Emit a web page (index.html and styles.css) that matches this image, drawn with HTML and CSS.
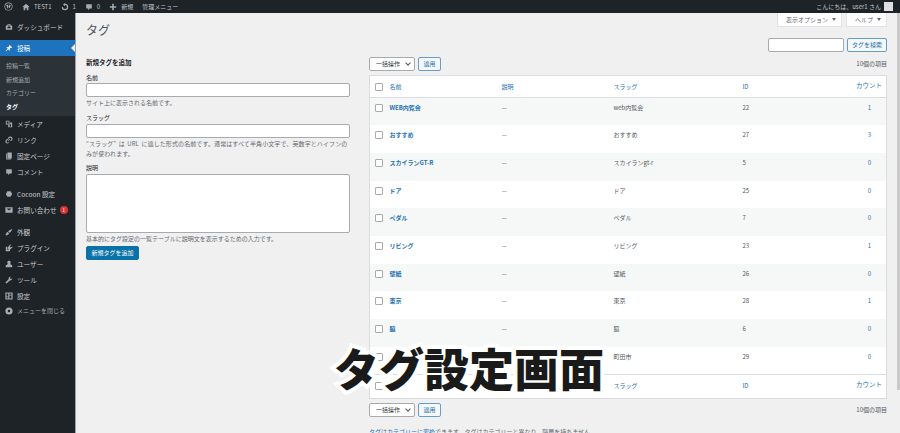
FILE: index.html
```html
<!DOCTYPE html>
<html lang="ja">
<head>
    <meta charset="UTF-8">
    <title>タグ設定画面</title>
    <link rel="stylesheet" href="styles.css">
</head>
<body>
    <svg class="defs" width="0" height="0">
        <symbol id="i-dash" viewBox="0 0 20 20"><path d="M2 6h16v11H2zM6 6V3h8v3h-2V5H8v1zM10 8a4 4 0 0 0-4 4v1h8v-1a4 4 0 0 0-4-4z" fill-rule="evenodd"/></symbol>
        <symbol id="i-pin" viewBox="0 0 20 20"><path d="M11 2l7 7-2 1-1-1-3 3 0 4-1 1-3-4-5 5-1 0 0-1 5-5-4-3 1-1 4 0 3-3-1-1z"/></symbol>
        <symbol id="i-media" viewBox="0 0 20 20"><path d="M2 2h9v9H2zM4 4v5h5V4zM12 6h6v12H8v-6h4zM13 10v3a2 2 0 1 0 2 2v-5z" fill-rule="evenodd"/></symbol>
        <symbol id="i-link" viewBox="0 0 20 20"><path d="M13 1a6 6 0 0 1 6 6c0 3-2 5-5 6l-1-2c2-1 3-2 3-4a3 3 0 0 0-5-2L9 7 7 6c1-3 3-5 6-5zM7 7l2 2c-3 1-5 3-5 5a2 2 0 0 0 4 1l2 2c-1 1-2 2-4 2-3 0-5-2-5-5 0-3 3-6 6-7zM12 7l1 1-5 5-1-1z"/></symbol>
        <symbol id="i-page" viewBox="0 0 20 20"><path d="M6 1h11v15H6zM3 4h2v13h10v2H3z"/></symbol>
        <symbol id="i-comment" viewBox="0 0 20 20"><path d="M3 3h14v11h-5l-4 4v-4H3z"/></symbol>
        <symbol id="i-cocoon" viewBox="0 0 20 20"><path d="M6 3h8l4 7-4 7H6l-4-7z"/></symbol>
        <symbol id="i-mail" viewBox="0 0 20 20"><path d="M1 3h18v14H1zM4 6l6 5 6-5z" fill-rule="evenodd"/></symbol>
        <symbol id="i-brush" viewBox="0 0 20 20"><path d="M19 2l-9 4-2 3 3 3 3-2zM7 10l-3 1-3 7c4 1 8-1 9-5z"/></symbol>
        <symbol id="i-plug" viewBox="0 0 20 20"><path d="M13 1l2 1-3 5 2 2 4-3 1 2-4 4-2 2-1 4H2v-3h6l1-2-2-2 1-4zM2 7h4v8H2z"/></symbol>
        <symbol id="i-user" viewBox="0 0 20 20"><path d="M10 2a4 4 0 0 1 3 7l1 2 4 2v5H2v-5l4-2 1-2a4 4 0 0 1 3-7z"/></symbol>
        <symbol id="i-tool" viewBox="0 0 20 20"><path d="M18 5l-3 3-3-3 3-3a5 5 0 0 0-6 6l-8 8 3 3 8-8a5 5 0 0 0 6-6z"/></symbol>
        <symbol id="i-set" viewBox="0 0 20 20"><path d="M1 1h18v18H1zM4 4v7h4V4zM4 13v3h4v-3zM11 4v3h5V4zM11 9v7h5V9z" fill-rule="evenodd"/></symbol>
        <symbol id="i-close" viewBox="0 0 20 20"><path d="M10 1a9 9 0 1 1 0 18 9 9 0 0 1 0-18zM10 7a3 3 0 1 0 0 6 3 3 0 0 0 0-6z" fill-rule="evenodd"/></symbol>
        <symbol id="i-wp" viewBox="0 0 20 20"><path d="M10 1a9 9 0 1 1 0 18 9 9 0 0 1 0-18zM10 2.500a7.500 7.500 0 1 0 0 15 7.500 7.500 0 0 0 0-15zM5 7l3 8 2-5 2 5 3-8-1-1h-3l1 1-2 4-1-4 1-1H5z" fill-rule="evenodd"/></symbol>
        <symbol id="i-home" viewBox="0 0 20 20"><path d="M10 2l9 8h-3v8h-4v-5H8v5H4v-8H1z"/></symbol>
        <symbol id="i-update" viewBox="0 0 20 20"><path d="M10 2a8 8 0 1 1-8 8h3a5 5 0 1 0 5-5v3L5 4l5-4z"/></symbol>
        <symbol id="i-plus" viewBox="0 0 20 20"><path d="M8 2h4v6h6v4h-6v6H8v-6H2V8h6z"/></symbol>
    </svg>

    <div class="adminbar">
        <div class="bar-left">
            <svg class="bar-icon wp"><use href="#i-wp"/></svg>
            <span class="bar-item"><svg class="bar-icon"><use href="#i-home"/></svg>TEST1</span>
            <span class="bar-item"><svg class="bar-icon"><use href="#i-update"/></svg>1</span>
            <span class="bar-item"><svg class="bar-icon"><use href="#i-comment"/></svg>0</span>
            <span class="bar-item"><svg class="bar-icon"><use href="#i-plus"/></svg>新規</span>
            <span class="bar-item">管理メニュー</span>
        </div>
        <div class="bar-right">こんにちは、user1 さん<span class="avatar"></span></div>
    </div>

    <div class="wrap">
        <div class="sidebar">
            <div class="menu-item"><svg><use href="#i-dash"/></svg>ダッシュボード</div>
            <div class="menu-item active"><svg><use href="#i-pin"/></svg>投稿</div>
            <div class="submenu">
                <div>投稿一覧</div>
                <div>新規追加</div>
                <div>カテゴリー</div>
                <div class="current">タグ</div>
            </div>
            <div class="menu-item"><svg><use href="#i-media"/></svg>メディア</div>
            <div class="menu-item"><svg><use href="#i-link"/></svg>リンク</div>
            <div class="menu-item"><svg><use href="#i-page"/></svg>固定ページ</div>
            <div class="menu-item"><svg><use href="#i-comment"/></svg>コメント</div>
            <div class="menu-item sep"><svg><use href="#i-cocoon"/></svg>Cocoon 設定</div>
            <div class="menu-item"><svg><use href="#i-mail"/></svg>お問い合わせ<span class="badge">1</span></div>
            <div class="menu-item sep"><svg><use href="#i-brush"/></svg>外観</div>
            <div class="menu-item"><svg><use href="#i-plug"/></svg>プラグイン</div>
            <div class="menu-item"><svg><use href="#i-user"/></svg>ユーザー</div>
            <div class="menu-item"><svg><use href="#i-tool"/></svg>ツール</div>
            <div class="menu-item"><svg><use href="#i-set"/></svg>設定</div>
            <div class="menu-item dim"><svg><use href="#i-close"/></svg>メニューを閉じる</div>
        </div>

        <div class="main">
            <div class="screen-meta">
                <span class="meta-tab">表示オプション<i class="arrow"></i></span>
                <span class="meta-tab">ヘルプ<i class="arrow"></i></span>
            </div>
            <h1 class="page-title">タグ</h1>
            <div class="search-row">
                <input class="text-input search" type="text">
                <button class="btn search-btn">タグを検索</button>
            </div>
            <div class="columns">
                <div class="col-form">
                    <h2>新規タグを追加</h2>
                    <label>名前</label>
                    <input class="text-input" type="text">
                    <p class="hint">サイト上に表示される名前です。</p>
                    <label class="slug-label">スラッグ</label>
                    <input class="text-input" type="text">
                    <p class="hint wide">“スラッグ” は URL に適した形式の名前です。通常はすべて半角小文字で、英数字とハイフンの<br>みが使われます。</p>
                    <label class="desc-label">説明</label>
                    <textarea class="text-area"></textarea>
                    <p class="hint">基本的にタグ設定の一覧テーブルに説明文を表示するための入力です。</p>
                    <button class="btn primary">新規タグを追加</button>
                </div>
                <div class="col-table">
                    <div class="tablenav top">
                        <span class="select">一括操作<i class="chev"></i></span>
                        <button class="btn apply">適用</button>
                        <span class="count-text">10個の項目</span>
                    </div>
                    <table class="tags">
                        <thead>
                            <tr><th class="c-check"><span class="check"></span></th><th class="c-name">名前</th><th class="c-desc">説明</th><th class="c-slug">スラッグ</th><th class="c-id">ID</th><th class="c-count">カウント</th></tr>
                        </thead>
                        <tbody>
                            <tr><td class="c-check"><span class="check"></span></td><td class="c-name">WEB内覧会</td><td class="c-desc">—</td><td class="c-slug">web内覧会</td><td class="c-id">22</td><td class="c-count">1</td></tr>
                            <tr><td class="c-check"><span class="check"></span></td><td class="c-name">おすすめ</td><td class="c-desc">—</td><td class="c-slug">おすすめ</td><td class="c-id">27</td><td class="c-count">3</td></tr>
                            <tr><td class="c-check"><span class="check"></span></td><td class="c-name">スカイランGT-R</td><td class="c-desc">—</td><td class="c-slug">スカイランgt-r</td><td class="c-id">5</td><td class="c-count">0</td></tr>
                            <tr><td class="c-check"><span class="check"></span></td><td class="c-name">ドア</td><td class="c-desc">—</td><td class="c-slug">ドア</td><td class="c-id">25</td><td class="c-count">0</td></tr>
                            <tr><td class="c-check"><span class="check"></span></td><td class="c-name">ペダル</td><td class="c-desc">—</td><td class="c-slug">ペダル</td><td class="c-id">7</td><td class="c-count">0</td></tr>
                            <tr><td class="c-check"><span class="check"></span></td><td class="c-name">リビング</td><td class="c-desc">—</td><td class="c-slug">リビング</td><td class="c-id">23</td><td class="c-count">1</td></tr>
                            <tr><td class="c-check"><span class="check"></span></td><td class="c-name">壁紙</td><td class="c-desc">—</td><td class="c-slug">壁紙</td><td class="c-id">26</td><td class="c-count">0</td></tr>
                            <tr><td class="c-check"><span class="check"></span></td><td class="c-name">東京</td><td class="c-desc">—</td><td class="c-slug">東京</td><td class="c-id">28</td><td class="c-count">1</td></tr>
                            <tr><td class="c-check"><span class="check"></span></td><td class="c-name">脇</td><td class="c-desc">—</td><td class="c-slug">脇</td><td class="c-id">6</td><td class="c-count">0</td></tr>
                            <tr><td class="c-check"><span class="check"></span></td><td class="c-name">町田市</td><td class="c-desc">—</td><td class="c-slug">町田市</td><td class="c-id">29</td><td class="c-count">0</td></tr>
                        </tbody>
                        <tfoot>
                            <tr><th class="c-check"><span class="check"></span></th><th class="c-name">名前</th><th class="c-desc">説明</th><th class="c-slug">スラッグ</th><th class="c-id">ID</th><th class="c-count">カウント</th></tr>
                        </tfoot>
                    </table>
                    <div class="tablenav bottom">
                        <span class="select">一括操作<i class="chev"></i></span>
                        <button class="btn apply">適用</button>
                        <span class="count-text">10個の項目</span>
                    </div>
                    <p class="foot-note"><a>タグ</a>は<a>カテゴリーに変換</a>できます。タグはカテゴリーと異なり、階層を持ちません。</p>
                </div>
            </div>
        </div>
    </div>

    <div class="caption">タグ設定画面</div>
    <div class="scrollbar"></div>
</body>
</html>
```

FILE: styles.css
```css
html, body {
    height: 100%;
}
body {
    margin: 0;
    height: 433px;
    overflow: hidden;
    position: relative;
    background: #f0f0f1;
    color: #3c434a;
    font-family: "Noto Sans CJK JP", "Noto Sans", sans-serif;
    font-size: 6px;
    line-height: 10px;
}
.defs {
    position: absolute;
}

/* admin bar */
.adminbar {
    height: 13px;
    background: #1d2327;
    color: #c3c4c7;
    display: flex;
    justify-content: space-between;
    align-items: center;
    font-size: 6px;
}
.bar-left {
    display: flex;
    align-items: center;
    padding-left: 4px;
}
.bar-item {
    display: flex;
    align-items: center;
    gap: 4px;
    margin-left: 9px;
}
.bar-icon {
    width: 8px;
    height: 8px;
    fill: #a7aaad;
}
.bar-icon.wp {
    width: 9px;
    height: 9px;
}
.bar-right {
    display: flex;
    align-items: center;
    gap: 3px;
    padding-right: 7px;
}
.avatar {
    width: 9px;
    height: 9px;
    background: #e0e0e0;
}

.wrap {
    display: flex;
    height: 420px;
}

/* side menu */
.sidebar {
    width: 76px;
    flex: none;
    background: #1d2327;
    color: #c9cbce;
    padding-top: 6px;
    border-right: 1px solid #9aa0a5;
    box-sizing: border-box;
    font-size: 6.600px;
}
.menu-item {
    height: 16px;
    display: flex;
    align-items: center;
    padding-left: 5px;
    gap: 4px;
}
.menu-item svg {
    width: 8px;
    height: 8px;
    fill: #a7aaad;
    flex: none;
}
.menu-item.active {
    background: #1e73be;
    color: #fff;
    position: relative;
    margin-top: 5px;
}
.menu-item.active svg {
    fill: #fff;
}
.menu-item.active::after {
    content: "";
    position: absolute;
    right: 0;
    top: 4px;
    border: 4px solid transparent;
    border-right-color: #f0f0f1;
    border-left: 0;
}
.menu-item.sep {
    margin-top: 6px;
}
.menu-item.dim {
    color: #a7aaad;
    font-size: 6px;
    margin-top: -1px;
}
.submenu {
    background: #2c3338;
    color: #a7aaad;
    padding: 3px 0 3px 6px;
    font-size: 6px;
    line-height: 13.500px;
}
.submenu .current {
    color: #fff;
    font-weight: 700;
}
.badge {
    width: 8px;
    height: 8px;
    border-radius: 50%;
    background: #d63638;
    color: #fff;
    font-size: 5px;
    line-height: 8px;
    text-align: center;
    margin-left: -1px;
}

/* main area */
.main {
    flex: 1;
    min-width: 0;
    padding: 0 13px 0 10px;
}
.screen-meta {
    display: flex;
    justify-content: flex-end;
    gap: 4px;
}
.meta-tab {
    height: 14px;
    line-height: 13px;
    padding: 0 5px 0 8px;
    background: #fff;
    border: 1px solid #e2e2e4;
    border-top: 0;
    box-sizing: border-box;
    color: #646970;
    font-size: 6px;
}
.arrow {
    display: inline-block;
    margin: 0 0 1px 4px;
    border: 2px solid transparent;
    border-top: 3px solid #646970;
    border-bottom: 0;
    vertical-align: middle;
}
.page-title {
    margin: -6px 0 0;
    font-size: 12px;
    line-height: 17px;
    font-weight: 400;
    color: #50575e;
}
.search-row {
    display: flex;
    justify-content: flex-end;
    gap: 3px;
}
.text-input {
    display: block;
    width: 100%;
    height: 14px;
    margin: 0;
    padding: 0;
    box-sizing: border-box;
    background: #fff;
    border: 1px solid #a8aaae;
    border-radius: 2px;
}
.text-input.search {
    width: 76px;
}
.btn {
    height: 14px;
    padding: 0;
    margin: 0;
    background: #f6f7f7;
    border: 1px solid #5f9fd0;
    border-radius: 2px;
    color: #2271b1;
    font-family: inherit;
    font-size: 6px;
    line-height: 12px;
}
.search-btn {
    width: 40px;
}
.apply {
    width: 23px;
}
.btn.primary {
    display: block;
    margin-top: 2px;
    width: 53px;
    background: #0a72a6;
    border-color: #0a72a6;
    color: #fff;
}

.columns {
    display: flex;
    gap: 19px;
}

/* add tag form */
.col-form {
    width: 264px;
    flex: none;
    padding-top: 5px;
}
.col-form h2 {
    margin: 0 0 7px;
    font-size: 6.500px;
    line-height: 10px;
    font-weight: 700;
    color: #1d2327;
}
.col-form label {
    display: block;
    color: #1d2327;
    font-size: 6px;
    line-height: 8px;
    margin-bottom: 1px;
}
.col-form .slug-label {
    margin-top: 6px;
    margin-bottom: 2px;
}
.col-form .desc-label {
    margin-top: 5px;
    margin-bottom: 2px;
}
.hint {
    margin: 1px 0 0;
    color: #646970;
    font-size: 6px;
    line-height: 10px;
}
.hint.wide {
    white-space: nowrap;
    letter-spacing: 0.1px;
    word-spacing: 1px;
}
.text-area {
    display: block;
    width: 100%;
    height: 59px;
    margin: 0;
    padding: 0;
    box-sizing: border-box;
    background: #fff;
    border: 1px solid #a8aaae;
    border-radius: 2px;
    resize: none;
}

/* tag list */
.col-table {
    width: 518px;
    flex: none;
}
.tablenav {
    display: flex;
    align-items: center;
    gap: 3px;
    height: 14px;
}
.tablenav.top {
    margin: 5px 0 4px;
}
.tablenav.bottom {
    margin-top: 4px;
}
.select {
    width: 46px;
    height: 14px;
    box-sizing: border-box;
    background: #fff;
    border: 1px solid #a8aaae;
    border-radius: 2px;
    padding-left: 6px;
    display: flex;
    align-items: center;
    font-size: 6px;
    color: #2c3338;
    position: relative;
}
.chev {
    position: absolute;
    right: 4px;
    top: 3px;
    width: 3px;
    height: 3px;
    border-right: 1px solid #50575e;
    border-bottom: 1px solid #50575e;
    transform: rotate(45deg);
}
.count-text {
    margin-left: auto;
    font-size: 6px;
    color: #50575e;
}
.tags {
    width: 100%;
    table-layout: fixed;
    border-collapse: collapse;
    background: #fff;
    border: 1px solid #dcdcde;
    font-size: 6px;
}
.tags th {
    height: 22px;
    padding: 0;
    box-sizing: border-box;
    font-weight: 400;
    text-align: left;
    color: #2271b1;
}
.tags thead th {
    border-bottom: 1px solid #dcdcde;
}
.tags tfoot th {
    border-top: 1px solid #dcdcde;
    height: 24px;
}
.tags td {
    height: 27.700px;
    padding: 5px 0 0;
    box-sizing: border-box;
    vertical-align: top;
    color: #50575e;
}
.tags tbody tr:nth-child(odd) {
    background: #f6f7f7;
}
.tags td.c-name {
    color: #2271b1;
    font-weight: 700;
}
.tags th.c-count {
    vertical-align: top;
    padding-top: 4px;
    text-align: right;
    padding-right: 4px;
    font-size: 6.500px;
}
.tags td.c-count {
    text-align: right;
    padding-right: 15px;
    color: #2271b1;
}
.c-check {
    width: 20px;
}
.c-name {
    width: 112px;
}
.c-desc {
    width: 112px;
}
.c-slug {
    width: 129px;
}
.c-id {
    width: 92px;
}
.check {
    display: block;
    box-sizing: border-box;
    width: 8px;
    height: 8px;
    margin-left: 5px;
    background: #fff;
    border: 1px solid #a8aaae;
    border-radius: 1px;
}
td .check {
    margin-top: 1px;
}
.foot-note {
    margin: 10px 0 0;
    font-size: 6px;
    color: #646970;
}
.foot-note a {
    color: #2271b1;
}

/* big overlay caption */
.caption {
    position: absolute;
    left: 334px;
    top: 335px;
    font-size: 45px;
    line-height: 66px;
    font-weight: 900;
    color: #1a1a1a;
    -webkit-text-stroke: 8px #fff;
    paint-order: stroke fill;
    white-space: nowrap;
}
.scrollbar {
    position: absolute;
    right: 0;
    top: 13px;
    width: 3px;
    height: 377px;
    background: #c8c8c8;
}
```
